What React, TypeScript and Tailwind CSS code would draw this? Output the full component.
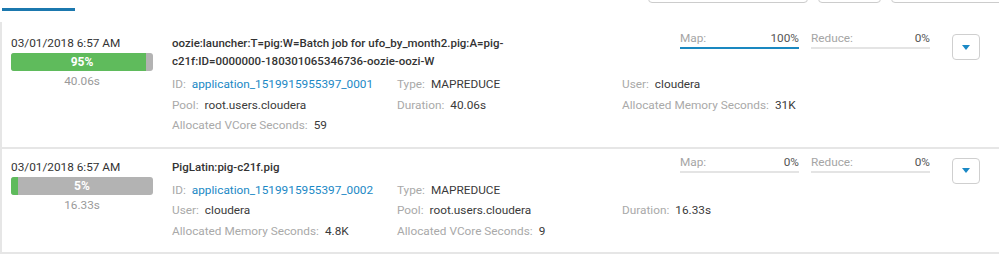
type Cell = [string, string, boolean?] | null;

type Job = {
  date: string;
  progress: number;
  elapsed: string;
  name: string;
  map: number;
  reduce: number;
  cells: Cell[];
};

const jobs: Job[] = [
  {
    date: "03/01/2018 6:57 AM",
    progress: 95,
    elapsed: "40.06s",
    name: "oozie:launcher:T=pig:W=Batch job for ufo_by_month2.pig:A=pig-c21f:ID=0000000-180301065346736-oozie-oozi-W",
    map: 100,
    reduce: 0,
    cells: [
      ["ID:", "application_1519915955397_0001", true],
      ["Type:", "MAPREDUCE"],
      ["User:", "cloudera"],
      ["Pool:", "root.users.cloudera"],
      ["Duration:", "40.06s"],
      ["Allocated Memory Seconds:", "31K"],
      ["Allocated VCore Seconds:", "59"],
    ],
  },
  {
    date: "03/01/2018 6:57 AM",
    progress: 5,
    elapsed: "16.33s",
    name: "PigLatin:pig-c21f.pig",
    map: 0,
    reduce: 0,
    cells: [
      ["ID:", "application_1519915955397_0002", true],
      ["Type:", "MAPREDUCE"],
      null,
      ["User:", "cloudera"],
      ["Pool:", "root.users.cloudera"],
      ["Duration:", "16.33s"],
      ["Allocated Memory Seconds:", "4.8K"],
      ["Allocated VCore Seconds:", "9"],
    ],
  },
];

function Meter({ label, value }: { label: string; value: number }) {
  return (
    <div className="w-[119px]">
      <div className="flex justify-between leading-[14px]">
        <span className="text-[#a5a5a5]">{label}</span>
        <span className="text-[#555]">{value}%</span>
      </div>
      <div className={`mt-[2px] h-[2px] ${value === 100 ? "bg-[#1a88c0]" : "bg-[#e4e4e4]"}`} />
    </div>
  );
}

function Field({ cell }: { cell: Cell }) {
  if (!cell) return <div className="h-[20.5px]" />;
  const [label, value, link] = cell;
  return (
    <div className="h-[20.5px] whitespace-nowrap leading-[20.5px]">
      <span className="mr-[6px] text-[#a9a9a9]">{label}</span>
      <span className={link ? "text-[#1a88c5]" : "text-[#3a3a3a]"}>{value}</span>
    </div>
  );
}

function JobRow({ job, first }: { job: Job; first?: boolean }) {
  return (
    <div
      className={`flex border-b-2 border-l-2 border-[#e6e6e6] pb-[11px] pl-[9px] pr-[19px] ${first ? "pt-[9px]" : "pt-[6px]"}`}
    >
      <div className="w-[142px] shrink-0 text-center">
        <div className="mt-[4px] text-left leading-[16px] text-[#333]">{job.date}</div>
        <div className="relative mt-[2px] flex h-[18px] overflow-hidden rounded-[3px] bg-[#b3b3b3]">
          <div className="h-full bg-[#5fbb5c]" style={{ width: `${job.progress}%` }} />
          <span className="absolute inset-0 text-center text-[12px] font-bold leading-[18px] text-white">
            {job.progress}%
          </span>
        </div>
        <div className="mt-[2px] leading-[16px] text-[#9a9a9a]">{job.elapsed}</div>
      </div>

      <div className="ml-[19px] flex-1">
        <div className="flex items-start">
          <div className="mt-[3px] w-[345px] text-[11.5px] font-medium leading-[18px] text-[#333]">
            {job.name}
          </div>
          <div className="ml-auto flex h-[21px] items-start">
            <Meter label="Map:" value={job.map} />
            <div className="ml-[12px]">
              <Meter label="Reduce:" value={job.reduce} />
            </div>
            <button className="ml-[22px] mt-[3px] flex h-[26px] w-[28px] items-center justify-center rounded-[4px] border border-[#cfcfcf] bg-white">
              <svg width="8" height="5" viewBox="0 0 8 5">
                <path d="M0 0h8L4 5z" fill="#1a88c5" />
              </svg>
            </button>
          </div>
        </div>
        <div className="mt-[4px] grid grid-cols-[225px_225px_1fr]">
          {job.cells.map((c, i) => (
            <Field key={i} cell={c} />
          ))}
        </div>
      </div>
    </div>
  );
}

export default function App() {
  return (
    <div className="h-[263px] w-[999px] overflow-hidden bg-white font-['Roboto',sans-serif] text-[11.8px]">
      <div className="flex h-[22px] items-start justify-between">
        <div className="ml-[2px] mt-[8px] h-[3px] w-[73px] bg-[#1b78ae]" />
        <div className="-mt-[27px] flex gap-[10px]">
          <div className="h-[30px] w-[160px] rounded-[4px] border border-[#cccccc]" />
          <div className="h-[30px] w-[63px] rounded-[4px] border border-[#cccccc]" />
          <div className="-mr-[12px] h-[30px] w-[120px] rounded-[4px] border border-[#cccccc]" />
        </div>
      </div>
      {jobs.map((j, i) => (
        <JobRow key={i} job={j} first={i === 0} />
      ))}
    </div>
  );
}
